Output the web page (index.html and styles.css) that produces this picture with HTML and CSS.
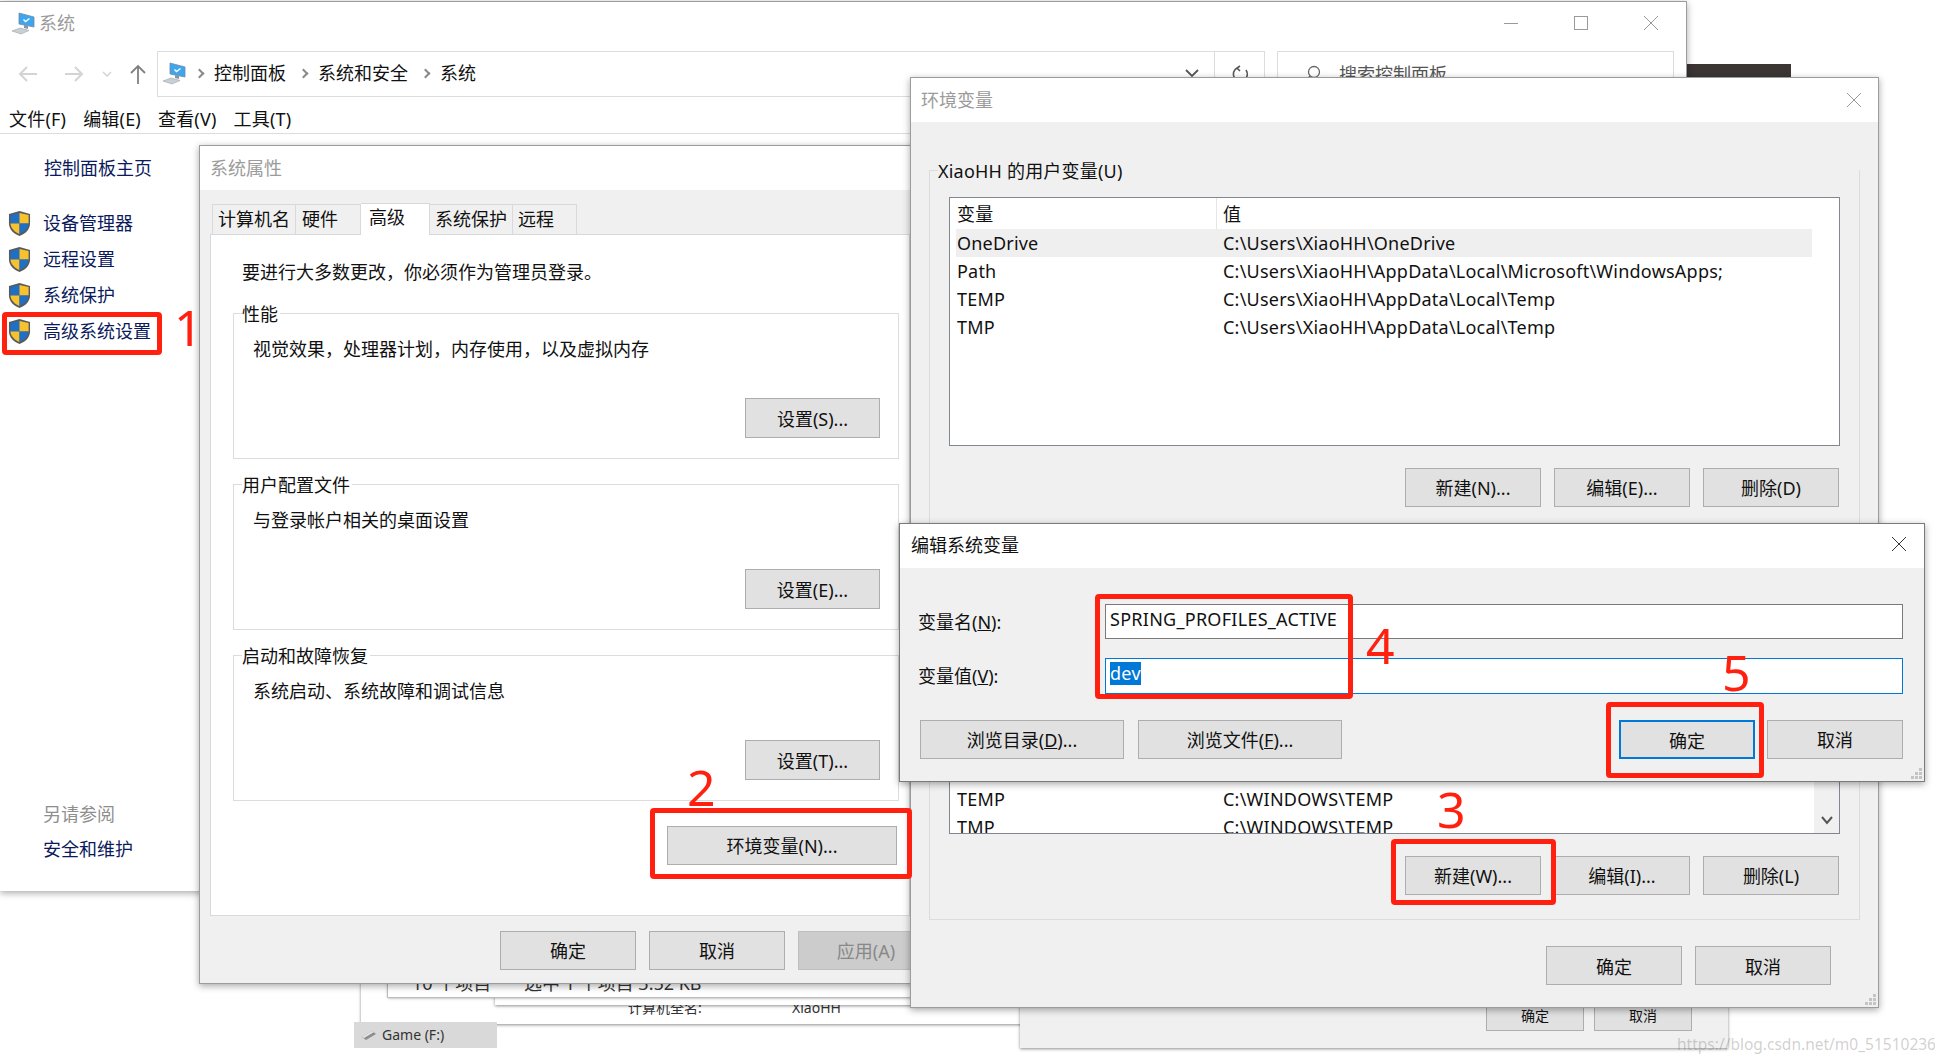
FILE: index.html
```html
<!DOCTYPE html>
<html lang="zh-CN">
<head>
    <meta charset="UTF-8">
    <meta name="viewport" content="width=device-width, initial-scale=1.0">
    <title>系统</title>
    <link rel="stylesheet" href="styles.css">
</head>
<body>
    <svg class="icon-defs" width="0" height="0">
        <defs>
            <symbol id="shield" viewBox="0 0 24 28">
                <path d="M12 1 L23 4 V14 C23 20 18 25 12 27 C6 25 1 20 1 14 V4 Z" fill="#5a5a5a"/>
                <path d="M12 3 V14 H2.5 V5 Z" fill="#1f6fc4"/>
                <path d="M12 3 L21.5 5 V14 H12 Z" fill="#f7c22e"/>
                <path d="M2.5 14 H12 V25 C7 23 3 19 2.5 14 Z" fill="#f7c22e"/>
                <path d="M21.5 14 H12 V25 C17 23 21 19 21.5 14 Z" fill="#1f6fc4"/>
            </symbol>
            <symbol id="computer" viewBox="0 0 24 24">
                <path d="M8 2 L23 6 V16 L8 13 Z" fill="#3fa6ee" stroke="#6f8ca3" stroke-width="0.8"/>
                <path d="M12.5 8.5 L14.5 10.5 L18.5 7.5" fill="none" stroke="#fff" stroke-width="1.4"/>
                <path d="M13 14 L17 15 L17 18 L13 17 Z" fill="#8b959c"/>
                <path d="M1 20 L9 17 L18 19.5 L10 23 Z" fill="#c9d0d5" stroke="#9aa6ae" stroke-width="0.6"/>
            </symbol>
            <symbol id="grip" viewBox="0 0 12 12">
                <path d="M8 0h3v3H8zM4 4h3v3H4zM8 4h3v3H8zM0 8h3v3H0zM4 8h3v3H4zM8 8h3v3H8z" fill="#c4c4c4"/>
            </symbol>
        </defs>
    </svg>

    <div class="desktop">
        <div class="dark-strip"></div>

        <!-- windows behind the dialogs -->
        <div class="back-win back-a">
            <span class="back-a-label">计算机全名:</span>
            <span class="back-a-value">XiaoHH</span>
        </div>
        <div class="back-win back-c"></div>
        <div class="back-win back-b">
            <span class="back-b-count">10 个项目</span>
            <span class="back-b-sel">选中 1 个项目 3.52 KB</span>
        </div>
        <div class="drive-tile">
            <svg class="drive-icon" width="16" height="12" viewBox="0 0 16 12"><path d="M1 8 L11 2 L15 5 L5 11 Z" fill="#8d8d8d"/><path d="M1 8 L11 2 L13 3 L3 9 Z" fill="#e6e6e6"/></svg>
            Game (F:)
        </div>
        <div class="back-win back-d">
            <div class="back-d-btns">
                <div class="btn">确定</div>
                <div class="btn">取消</div>
            </div>
        </div>

        <!-- control panel -->
        <div class="win explorer">
            <div class="explorer-title">
                <svg class="icon-computer"><use href="#computer"/></svg>
                <span class="title-muted">系统</span>
                <div class="caption-btns">
                    <svg width="16" height="16" viewBox="0 0 16 16"><path d="M1 8.5H15" stroke="#9a9a9a"/></svg>
                    <svg width="16" height="16" viewBox="0 0 16 16"><rect x="1.5" y="1.5" width="13" height="13" fill="none" stroke="#9a9a9a"/></svg>
                    <svg width="16" height="16" viewBox="0 0 16 16"><path d="M1 1L15 15M15 1L1 15" stroke="#9a9a9a"/></svg>
                </div>
            </div>
            <div class="explorer-nav">
                <div class="nav-btns">
                    <svg class="nav-back" width="20" height="18" viewBox="0 0 20 18"><path d="M19 9H2M9 2L2 9L9 16" fill="none" stroke="#d4d4d4" stroke-width="2"/></svg>
                    <svg class="nav-forward" width="20" height="18" viewBox="0 0 20 18"><path d="M1 9H18M11 2L18 9L11 16" fill="none" stroke="#d4d4d4" stroke-width="2"/></svg>
                    <svg class="nav-down" width="10" height="6" viewBox="0 0 10 6"><path d="M1 1L5 5L9 1" fill="none" stroke="#d4d4d4" stroke-width="1.5"/></svg>
                    <svg class="nav-up" width="18" height="20" viewBox="0 0 18 20"><path d="M9 20V2M2 9L9 2L16 9" fill="none" stroke="#808080" stroke-width="1.8"/></svg>
                </div>
                <div class="address">
                    <svg class="icon-computer"><use href="#computer"/></svg>
                    <span class="crumb-sep"></span>
                    <span>控制面板</span>
                    <span class="crumb-sep"></span>
                    <span>系统和安全</span>
                    <span class="crumb-sep"></span>
                    <span>系统</span>
                    <svg class="address-down" width="14" height="10" viewBox="0 0 14 10"><path d="M1 2L7 8L13 2" fill="none" stroke="#555" stroke-width="1.8"/></svg>
                </div>
                <div class="refresh">
                    <svg width="18" height="18" viewBox="0 0 18 18"><path d="M6 3A7 7 0 1 0 15 5M9 1L6 3L9 6" fill="none" stroke="#555" stroke-width="1.6"/></svg>
                </div>
                <div class="search">
                    <svg width="18" height="18" viewBox="0 0 18 18"><circle cx="10" cy="7" r="5.5" fill="none" stroke="#666" stroke-width="1.3"/><path d="M6 11L1 17" stroke="#666" stroke-width="1.3"/></svg>
                    <span>搜索控制面板</span>
                </div>
            </div>
            <div class="menubar">
                <span>文件(F)</span>
                <span>编辑(E)</span>
                <span>查看(V)</span>
                <span>工具(T)</span>
            </div>
            <div class="sidebar">
                <a class="side-home">控制面板主页</a>
                <ul class="side-tasks">
                    <li><svg class="icon-shield"><use href="#shield"/></svg>设备管理器</li>
                    <li><svg class="icon-shield"><use href="#shield"/></svg>远程设置</li>
                    <li><svg class="icon-shield"><use href="#shield"/></svg>系统保护</li>
                    <li><svg class="icon-shield"><use href="#shield"/></svg>高级系统设置</li>
                </ul>
                <div class="side-bottom">
                    <div class="side-muted">另请参阅</div>
                    <a class="side-link">安全和维护</a>
                </div>
            </div>
        </div>

        <!-- system properties -->
        <div class="win sysprops">
            <div class="dlg-title title-muted">系统属性</div>
            <div class="tabs">
                <div class="tab">计算机名</div>
                <div class="tab">硬件</div>
                <div class="tab tab-active">高级</div>
                <div class="tab">系统保护</div>
                <div class="tab">远程</div>
            </div>
            <div class="tab-panel">
                <p class="panel-intro">要进行大多数更改，你必须作为管理员登录。</p>
                <div class="group">
                    <div class="group-label">性能</div>
                    <p class="group-text">视觉效果，处理器计划，内存使用，以及虚拟内存</p>
                    <div class="btn btn-setting">设置(S)...</div>
                </div>
                <div class="group">
                    <div class="group-label">用户配置文件</div>
                    <p class="group-text">与登录帐户相关的桌面设置</p>
                    <div class="btn btn-setting">设置(E)...</div>
                </div>
                <div class="group">
                    <div class="group-label">启动和故障恢复</div>
                    <p class="group-text">系统启动、系统故障和调试信息</p>
                    <div class="btn btn-setting">设置(T)...</div>
                </div>
                <div class="btn btn-env">环境变量(N)...</div>
            </div>
            <div class="dlg-footer sys-footer">
                <div class="btn">确定</div>
                <div class="btn">取消</div>
                <div class="btn btn-disabled">应用(A)</div>
            </div>
        </div>

        <!-- environment variables -->
        <div class="win envvars">
            <div class="dlg-title title-muted">环境变量
                <svg class="dlg-close" width="16" height="16" viewBox="0 0 16 16"><path d="M1 1L15 15M15 1L1 15" stroke="#9a9a9a"/></svg>
            </div>
            <div class="env-group">
                <div class="group-label env-label">XiaoHH 的用户变量(U)</div>
                <div class="var-list user-list">
                    <div class="var-head"><span class="var-name">变量</span><span class="var-value">值</span></div>
                    <div class="var-row var-selected"><span class="var-name">OneDrive</span><span class="var-value">C:\Users\XiaoHH\OneDrive</span></div>
                    <div class="var-row"><span class="var-name">Path</span><span class="var-value">C:\Users\XiaoHH\AppData\Local\Microsoft\WindowsApps;</span></div>
                    <div class="var-row"><span class="var-name">TEMP</span><span class="var-value">C:\Users\XiaoHH\AppData\Local\Temp</span></div>
                    <div class="var-row"><span class="var-name">TMP</span><span class="var-value">C:\Users\XiaoHH\AppData\Local\Temp</span></div>
                </div>
                <div class="btn-row">
                    <div class="btn">新建(N)...</div>
                    <div class="btn">编辑(E)...</div>
                    <div class="btn">删除(D)</div>
                </div>
                <div class="var-list sys-list">
                    <div class="sys-rows">
                        <div class="var-row"><span class="var-name">TEMP</span><span class="var-value">C:\WINDOWS\TEMP</span></div>
                        <div class="var-row"><span class="var-name">TMP</span><span class="var-value">C:\WINDOWS\TEMP</span></div>
                    </div>
                    <div class="scrollbar">
                        <svg width="12" height="10" viewBox="0 0 12 10"><path d="M1 2L6 8L11 2" fill="none" stroke="#555" stroke-width="2"/></svg>
                    </div>
                </div>
                <div class="btn-row btn-row-sys">
                    <div class="btn">新建(W)...</div>
                    <div class="btn">编辑(I)...</div>
                    <div class="btn">删除(L)</div>
                </div>
            </div>
            <div class="dlg-footer env-footer">
                <div class="btn">确定</div>
                <div class="btn">取消</div>
            </div>
            <svg class="grip" width="12" height="12"><use href="#grip"/></svg>
        </div>

        <!-- edit system variable -->
        <div class="win editvar">
            <div class="dlg-title edit-title">编辑系统变量
                <svg class="dlg-close" width="16" height="16" viewBox="0 0 16 16"><path d="M1 1L15 15M15 1L1 15" stroke="#333"/></svg>
            </div>
            <div class="edit-form">
                <label>变量名(<u>N</u>):</label>
                <div class="field">SPRING_PROFILES_ACTIVE</div>
                <label>变量值(<u>V</u>):</label>
                <div class="field field-focus"><span class="selected-text">dev</span></div>
            </div>
            <div class="edit-btns">
                <div class="btn btn-browse">浏览目录(<u>D</u>)...</div>
                <div class="btn btn-browse">浏览文件(<u>F</u>)...</div>
                <div class="btn btn-default">确定</div>
                <div class="btn">取消</div>
            </div>
            <svg class="grip" width="12" height="12"><use href="#grip"/></svg>
        </div>

        <!-- red annotations -->
        <div class="mark mark-1"></div>
        <div class="mark mark-2"></div>
        <div class="mark mark-3"></div>
        <div class="mark mark-4"></div>
        <div class="mark mark-5"></div>
        <div class="step step-1">1</div>
        <div class="step step-2">2</div>
        <div class="step step-3">3</div>
        <div class="step step-4">4</div>
        <div class="step step-5">5</div>

        <div class="watermark">https://blog.csdn.net/m0_51510236</div>
    </div>
</body>
</html>
```

FILE: styles.css
```css
* {
    margin: 0;
    padding: 0;
    box-sizing: border-box;
}

body {
    background-color: white;
    font-family: "Noto Sans", "Noto Sans CJK SC", sans-serif;
    font-size: 18px;
    line-height: 26px;
    color: #111;
    overflow: hidden;
}

.icon-defs {
    position: absolute;
}

.desktop {
    position: relative;
    width: 1935px;
    height: 1062px;
    overflow: hidden;
}

.dark-strip {
    position: absolute;
    left: 1680px;
    top: 64px;
    width: 111px;
    height: 20px;
    background-color: #3b3634;
}

/* windows behind */
.back-win {
    position: absolute;
    background-color: white;
    box-shadow: 0 1px 3px rgba(0, 0, 0, 0.45);
    overflow: hidden;
}

.back-a {
    left: 361px;
    top: 960px;
    width: 680px;
    height: 64px;
}

.back-a-label,
.back-a-value {
    position: absolute;
    top: 35px;
    font-size: 14px;
    color: #333;
}

.back-a-label {
    left: 267px;
}

.back-a-value {
    left: 431px;
}

.back-b {
    left: 388px;
    top: 960px;
    width: 640px;
    height: 37px;
    box-shadow: 0 0 0 1px #bbb, 0 1px 3px rgba(0, 0, 0, 0.4);
}

.back-b-count,
.back-b-sel {
    position: absolute;
    top: 10px;
    color: #333;
}

.back-b-count {
    left: 24px;
}

.back-b-sel {
    left: 136px;
}

.back-c {
    left: 495px;
    top: 960px;
    width: 540px;
    height: 45px;
}

.back-d {
    left: 1020px;
    top: 960px;
    width: 708px;
    height: 88px;
    background-color: #f0f0f0;
}

.back-d-btns {
    display: flex;
    gap: 10px;
    margin: 40px 0 0 466px;
}

.back-d-btns .btn {
    width: 98px;
    height: 31px;
    font-size: 14px;
    line-height: 29px;
}

.drive-tile {
    position: absolute;
    left: 354px;
    top: 1022px;
    width: 143px;
    height: 26px;
    background-color: #d9d9d9;
    font-size: 14px;
    line-height: 26px;
    color: #333;
    display: flex;
    align-items: center;
    gap: 5px;
    padding-left: 7px;
}

/* shared window parts */
.win {
    position: absolute;
    background-color: #f0f0f0;
    border: 1px solid #9c9c9c;
    box-shadow: 0 2px 7px rgba(0, 0, 0, 0.35);
}

.title-muted {
    color: #9b9b9b;
}

.dlg-title {
    position: relative;
    height: 44px;
    background-color: white;
    line-height: 44px;
    padding-left: 10px;
}

.dlg-close {
    position: absolute;
    right: 16px;
    top: 14px;
}

.btn {
    flex-shrink: 0;
    width: 136px;
    height: 39px;
    background-color: #e1e1e1;
    border: 1px solid #adadad;
    text-align: center;
    line-height: 38px;
    color: #111;
}

.btn-disabled {
    background-color: #ccc;
    border-color: #bfbfbf;
    color: #888;
}

.grip {
    position: absolute;
    right: 1px;
    bottom: 1px;
}

/* control panel window */
.explorer {
    left: 0;
    top: 1px;
    width: 1687px;
    height: 890px;
    background-color: white;
    border-width: 1px 1px 0 0;
}

.explorer-title {
    display: flex;
    align-items: center;
    height: 49px;
    padding: 0 11px 8px;
    gap: 4px;
}

.icon-computer {
    width: 24px;
    height: 24px;
    flex-shrink: 0;
}

.caption-btns {
    margin-left: auto;
    margin-right: 16px;
    display: flex;
    gap: 54px;
}

.explorer-nav {
    display: flex;
    height: 46px;
}

.nav-btns {
    position: relative;
    width: 157px;
}

.nav-btns svg {
    position: absolute;
}

.nav-back {
    left: 18px;
    top: 14px;
}

.nav-forward {
    left: 64px;
    top: 14px;
}

.nav-down {
    left: 102px;
    top: 20px;
}

.nav-up {
    left: 129px;
    top: 13px;
}

.address {
    display: flex;
    align-items: center;
    width: 1058px;
    border: 1px solid #dcdcdc;
    padding: 0 0 2px 4px;
    gap: 10px;
}

.address .icon-computer {
    margin-right: -4px;
}

.crumb-sep {
    width: 7px;
    height: 7px;
    border-top: 2px solid #8a8a8a;
    border-right: 2px solid #8a8a8a;
    transform: rotate(45deg);
    margin-left: 4px;
    margin-right: 1px;
}

.address-down {
    margin-left: auto;
    margin-right: 15px;
}

.refresh {
    display: flex;
    align-items: center;
    justify-content: center;
    width: 50px;
    border: 1px solid #dcdcdc;
    border-left: none;
}

.search {
    display: flex;
    align-items: center;
    gap: 17px;
    width: 397px;
    margin-left: 12px;
    border: 1px solid #dcdcdc;
    padding-left: 26px;
    color: #555;
}

.menubar {
    display: flex;
    gap: 17px;
    height: 37px;
    padding: 9px 0 0 9px;
    line-height: 26px;
    letter-spacing: 0.2px;
    border-bottom: 1px solid #dcdcdc;
}

.sidebar {
    width: 199px;
    display: flex;
    flex-direction: column;
    color: #0a1a5c;
}

.side-home {
    margin: 21px 0 0 44px;
}

.side-tasks {
    list-style: none;
    margin-top: 24px;
}

.side-tasks li {
    display: flex;
    align-items: center;
    gap: 12px;
    height: 36px;
    padding-left: 8px;
    white-space: nowrap;
}

.icon-shield {
    width: 23px;
    height: 27px;
    flex-shrink: 0;
}

.side-bottom {
    margin: 452px 0 0 43px;
}

.side-muted {
    color: #8f8f8f;
    margin-bottom: 9px;
}

.side-link {
    display: block;
}

/* system properties */
.sysprops {
    left: 199px;
    top: 145px;
    width: 730px;
    height: 839px;
}

.tabs {
    display: flex;
    align-items: flex-end;
    height: 44px;
    padding-left: 12px;
}

.tab {
    height: 30px;
    padding: 0 5px;
    border: 1px solid #d9d9d9;
    border-bottom: none;
    border-left-width: 0;
    line-height: 28px;
    white-space: nowrap;
    background-color: #f0f0f0;
}

.tab:first-child {
    border-left-width: 1px;
}

.tab:nth-child(2) {
    width: 65px;
    padding-left: 6px;
}

.tab:last-child {
    width: 64px;
}

.tab-active {
    width: 69px;
    height: 32px;
    padding-left: 8px;
    background-color: white;
    line-height: 26px;
    margin-bottom: -1px;
    position: relative;
}

.tab-panel {
    display: flex;
    flex-direction: column;
    margin-left: 10px;
    width: 700px;
    height: 682px;
    background-color: white;
    border: 1px solid #d9d9d9;
    padding: 24px 0 0 22px;
}

.panel-intro {
    margin-left: 9px;
    margin-bottom: 28px;
}

.group {
    display: flex;
    flex-direction: column;
    width: 666px;
    height: 146px;
    border: 1px solid #dcdcdc;
    margin-bottom: 25px;
}

.group-label {
    align-self: flex-start;
    margin: -13px 0 0 8px;
    padding-right: 2px;
    background-color: white;
}

.group-text {
    margin: 9px 0 0 19px;
}

.btn-setting {
    width: 135px;
    height: 40px;
    align-self: flex-end;
    margin-top: auto;
    margin-bottom: 20px;
    margin-right: 18px;
    line-height: 40px;
}

.btn-env {
    width: 230px;
    align-self: flex-start;
    margin-left: 434px;
}

.dlg-footer {
    display: flex;
}

.sys-footer {
    padding-left: 300px;
    margin-top: 15px;
    gap: 13px;
}

/* environment variables */
.envvars {
    left: 910px;
    top: 77px;
    width: 969px;
    height: 931px;
}

.env-group {
    width: 931px;
    height: 750px;
    margin: 48px 0 0 18px;
    border: 1px solid #dcdcdc;
    padding-left: 19px;
}

.env-label {
    margin-left: -11px;
    background-color: #f0f0f0;
    letter-spacing: 0.2px;
}

.var-list {
    width: 891px;
    background-color: white;
    border: 1px solid #82878f;
    overflow: hidden;
}

.user-list {
    height: 249px;
    margin-top: 13px;
    padding: 0 27px 0 6px;
}

.var-head,
.var-row {
    display: flex;
    height: 28px;
    line-height: 28px;
}

.var-head {
    height: 31px;
    line-height: 32px;
}

.var-name {
    width: 261px;
    padding-left: 1px;
    flex-shrink: 0;
    letter-spacing: 0.2px;
}

.var-head .var-name {
    border-right: 1px solid #e5e5e5;
}

.var-value {
    padding-left: 6px;
    white-space: nowrap;
    letter-spacing: 0.23px;
}

.var-selected {
    background-color: #efefef;
}

.btn-row {
    display: flex;
    justify-content: flex-end;
    gap: 13px;
    width: 890px;
    margin-top: 22px;
    line-height: 39px;
}

.btn-row .btn {
    line-height: 39px;
}

.sys-list {
    display: flex;
    height: 274px;
    margin-top: 53px;
}

.sys-rows {
    flex: 1;
    display: flex;
    flex-direction: column;
    justify-content: flex-end;
    padding-left: 6px;
}

.sys-rows .var-row:last-child {
    margin-bottom: -8px;
}

.scrollbar {
    display: flex;
    align-items: flex-end;
    justify-content: center;
    width: 25px;
    background-color: #f0f0f0;
    padding-bottom: 8px;
}

.btn-row-sys {
    margin-top: 22px;
}

.env-footer {
    justify-content: flex-end;
    gap: 13px;
    padding-right: 47px;
    margin-top: 26px;
}

.env-footer .btn {
    line-height: 40px;
}

/* edit variable */
.editvar {
    left: 899px;
    top: 523px;
    width: 1026px;
    height: 259px;
    border-color: #7a7a7a;
}

.edit-title {
    height: 44px;
    line-height: 42px;
    padding-left: 11px;
}

.edit-title .dlg-close {
    top: 12px;
    right: 17px;
}

.edit-form {
    display: grid;
    grid-template-columns: 187px 798px;
    align-items: center;
    row-gap: 19px;
    padding: 36px 0 0 18px;
}

.field {
    height: 35px;
    background-color: white;
    border: 1px solid #7a7a7a;
    padding-left: 4px;
    line-height: 28px;
    letter-spacing: 0.27px;
}

.field-focus {
    height: 36px;
    padding-top: 3px;
    line-height: 23px;
    border-color: #0078d7;
}

.selected-text {
    display: inline-block;
    background-color: #0078d7;
    color: white;
    line-height: 23px;
}

.edit-btns {
    display: flex;
    gap: 14px;
    padding: 26px 0 0 20px;
}

.edit-btns .btn-browse {
    width: 204px;
}

.btn-default {
    margin-left: 263px;
    border: 2px solid #0078d7;
}

.edit-btns .btn:last-child {
    margin-left: -2px;
}

/* red annotations, drawn over the windows */
.mark {
    position: absolute;
    border: 5px solid #ff2010;
    border-radius: 4px;
}

.mark-1 {
    left: 2px;
    top: 312px;
    width: 160px;
    height: 43px;
}

.mark-2 {
    left: 650px;
    top: 808px;
    width: 262px;
    height: 71px;
}

.mark-3 {
    left: 1391px;
    top: 839px;
    width: 165px;
    height: 66px;
}

.mark-4 {
    left: 1095px;
    top: 594px;
    width: 258px;
    height: 105px;
}

.mark-5 {
    left: 1606px;
    top: 702px;
    width: 158px;
    height: 76px;
}

.step {
    position: absolute;
    color: #ff2010;
    font-family: "Noto Sans", sans-serif;
    font-size: 50px;
    line-height: 50px;
}

.step-1 {
    left: 174px;
    top: 302px;
}

.step-2 {
    left: 687px;
    top: 762px;
}

.step-3 {
    left: 1437px;
    top: 784px;
}

.step-4 {
    left: 1366px;
    top: 620px;
}

.step-5 {
    left: 1722px;
    top: 647px;
}

.watermark {
    position: absolute;
    left: 1677px;
    top: 1031px;
    font-size: 15.5px;
    color: rgba(120, 120, 120, 0.35);
    white-space: nowrap;
}
```
